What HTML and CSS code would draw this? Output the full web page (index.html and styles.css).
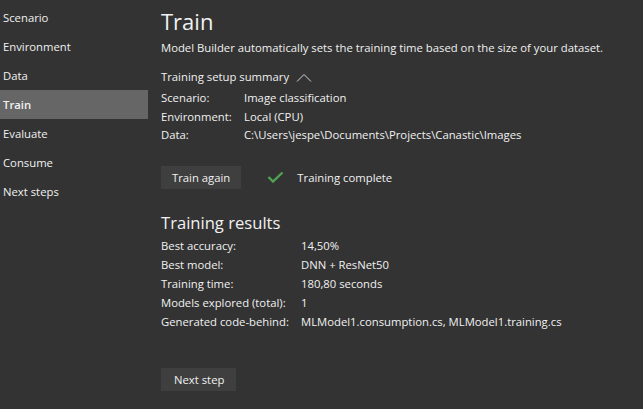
FILE: index.html
```html
<!DOCTYPE html>
<html>
<head>
<meta charset="utf-8">
<link rel="stylesheet" href="styles.css">
</head>
<body>
<div class="app">
  <nav class="sidebar">
    <div class="nav-item">Scenario</div>
    <div class="nav-item">Environment</div>
    <div class="nav-item">Data</div>
    <div class="nav-item active">Train</div>
    <div class="nav-item">Evaluate</div>
    <div class="nav-item">Consume</div>
    <div class="nav-item">Next steps</div>
  </nav>
  <main class="content">
    <h1 class="title">Train</h1>
    <p class="desc">Model Builder automatically sets the training time based on the size of your dataset.</p>
    <div class="summary-head">Training setup summary
      <svg class="chev" width="16" height="9" viewBox="0 0 16 9"><path d="M1 8.5 L8 1.5 L15 8.5" fill="none" stroke="#d8d8d8" stroke-width="1"/></svg>
    </div>
    <div class="kv setup">
      <div class="k">Scenario:</div><div class="v">Image classification</div>
      <div class="k">Environment:</div><div class="v">Local (CPU)</div>
      <div class="k">Data:</div><div class="v">C:\Users\jespe\Documents\Projects\Canastic\Images</div>
    </div>
    <div class="actions">
      <button class="btn">Train again</button>
      <div class="status">
        <svg class="check" width="17" height="12" viewBox="0 0 17 12"><path d="M1.5 6 L6 10.5 L15.5 1.5" fill="none" stroke="#4fa54f" stroke-width="2.4"/></svg>
        <span>Training complete</span>
      </div>
    </div>
    <h2 class="subtitle">Training results</h2>
    <div class="kv results">
      <div class="k">Best accuracy:</div><div class="v">14,50%</div>
      <div class="k">Best model:</div><div class="v">DNN + ResNet50</div>
      <div class="k">Training time:</div><div class="v">180,80 seconds</div>
      <div class="k">Models explored (total):</div><div class="v">1</div>
      <div class="k">Generated code-behind:</div><div class="v">MLModel1.consumption.cs, MLModel1.training.cs</div>
    </div>
    <button class="btn next">Next step</button>
  </main>
</div>
</body>
</html>
```
FILE: styles.css
```css
html, body {
  margin: 0;
  padding: 0;
  background: #333333;
  color: #f1f1f1;
  font-family: "Open Sans", "Noto Sans", sans-serif;
  font-size: 11.3px;
  width: 643px;
  height: 409px;
  overflow: hidden;
}
.app {
  display: flex;
  height: 409px;
}
.sidebar {
  width: 148px;
  padding-top: 3px;
  flex: none;
}
.nav-item {
  height: 29px;
  line-height: 29px;
  padding-left: 3px;
}
.nav-item.active {
  background: #666666;
  font-weight: 600;
}
.content {
  padding-left: 13px;
  flex: 1;
}
.title {
  font-size: 22px;
  font-weight: 400;
  margin: 6px 0 0;
  line-height: 30px;
}
.desc {
  margin: 3px 0 0;
  line-height: 18px;
}
.summary-head {
  margin-top: 11px;
  line-height: 18px;
  display: flex;
  align-items: center;
  gap: 7px;
}
.kv {
  display: grid;
  grid-template-columns: 83px auto;
  justify-content: start;
}
.kv .k, .kv .v {
  line-height: 18.5px;
}
.setup {
  margin-top: 3px;
}
.actions {
  display: flex;
  align-items: center;
  margin-top: 21px;
}
.btn {
  background: #3f3f3f;
  color: #f1f1f1;
  border: none;
  font: inherit;
  height: 23px;
  padding: 0 11px;
}
.status {
  display: flex;
  align-items: center;
  margin-left: 26px;
}
.check {
  margin-right: 13px;
}
.subtitle {
  font-size: 16.6px;
  font-weight: 400;
  margin: 21px 0 0;
  line-height: 26px;
}
.results {
  grid-template-columns: 140px auto;
}
.results .k, .results .v {
  line-height: 19px;
}
.next {
  margin-top: 37px;
  padding: 0 12px 0 13px;
}
```
